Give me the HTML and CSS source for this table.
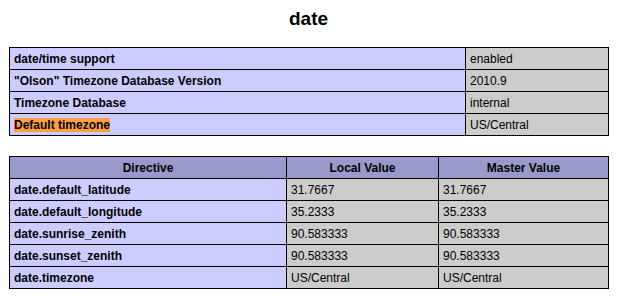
FILE: index.html
```html
<!DOCTYPE html>
<html>
<head>
<meta charset="utf-8">
<link rel="stylesheet" href="styles.css">
</head>
<body>
<div class="page">
  <h2 class="title">date</h2>
  <table class="info">
    <colgroup><col class="c-key"><col class="c-val"></colgroup>
    <tr><td class="e">date/time support</td><td class="v">enabled</td></tr>
    <tr><td class="e">"Olson" Timezone Database Version</td><td class="v">2010.9</td></tr>
    <tr><td class="e">Timezone Database</td><td class="v">internal</td></tr>
    <tr><td class="e"><span class="hl">Default timezone</span></td><td class="v">US/Central</td></tr>
  </table>
  <table class="info second">
    <colgroup><col class="c-dir"><col class="c-loc"><col class="c-mas"></colgroup>
    <tr class="h"><th>Directive</th><th>Local Value</th><th>Master Value</th></tr>
    <tr><td class="e">date.default_latitude</td><td class="v">31.7667</td><td class="v">31.7667</td></tr>
    <tr><td class="e">date.default_longitude</td><td class="v">35.2333</td><td class="v">35.2333</td></tr>
    <tr><td class="e">date.sunrise_zenith</td><td class="v">90.583333</td><td class="v">90.583333</td></tr>
    <tr><td class="e">date.sunset_zenith</td><td class="v">90.583333</td><td class="v">90.583333</td></tr>
    <tr><td class="e">date.timezone</td><td class="v">US/Central</td><td class="v">US/Central</td></tr>
  </table>
</div>
</body>
</html>
```

FILE: styles.css
```css
html, body {
  margin: 0;
  padding: 0;
  background: #fff;
  color: #000;
  font-family: "Liberation Sans", Arial, sans-serif;
}
.page {
  padding: 0 0 0 9px;
  display: flex;
  flex-direction: column;
  width: 599px;
}
.title {
  margin: 0;
  height: 47px;
  box-sizing: border-box;
  padding-top: 8px;
  font-size: 19px;
  line-height: 22px;
  font-weight: bold;
  text-align: center;
}
.info {
  width: 599px;
  border-collapse: collapse;
  table-layout: fixed;
  font-size: 12px;
}
.second {
  margin-top: 20px;
}
.c-key { width: 456px; }
.c-val { width: 143px; }
.c-dir { width: 277px; }
.c-loc { width: 152px; }
.c-mas { width: 170px; }
.info td, .info th {
  border: 1px solid #000;
  height: 21px;
  padding: 1px 4px 0;
  line-height: 20px;
  box-sizing: border-box;
  white-space: nowrap;
  overflow: hidden;
}
.e {
  background: #ccccff;
  font-weight: bold;
}
.v {
  background: #cccccc;
}
.h th {
  background: #9999cc;
  font-weight: bold;
  text-align: center;
}
.hl {
  background: #ff9f45;
}
```
